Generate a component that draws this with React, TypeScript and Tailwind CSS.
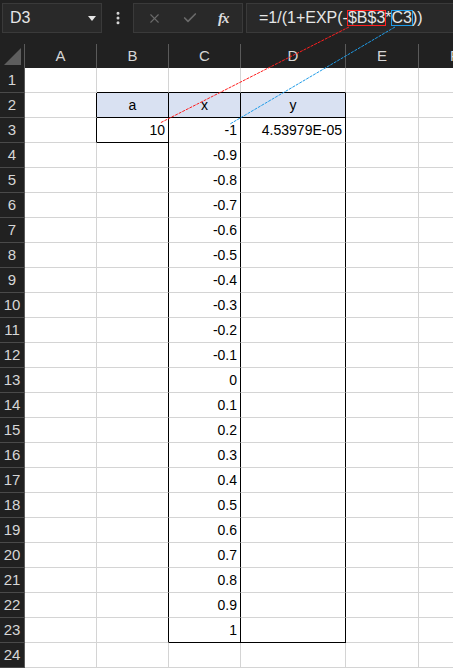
import { Check, X, EllipsisVertical } from "lucide-react";

const COLS = ["A", "B", "C", "D", "E", "F"];
const ROWS = Array.from({ length: 24 }, (_, i) => i + 1);

const xValues = [
  "-1", "-0.9", "-0.8", "-0.7", "-0.6", "-0.5", "-0.4", "-0.3", "-0.2", "-0.1",
  "0", "0.1", "0.2", "0.3", "0.4", "0.5", "0.6", "0.7", "0.8", "0.9", "1",
];

// col index: 0 = A ... 5 = F
function inTable(col: number, row: number) {
  if (col === 1) return row === 2 || row === 3;
  if (col === 2 || col === 3) return row >= 2 && row <= 23;
  return false;
}

// horizontal borders: header row boxed, B3 boxed, C3:C23 and D3:D23 outlined
function bottomIsBlack(col: number, row: number) {
  if (col >= 1 && col <= 3 && (row === 1 || row === 2)) return true;
  if (col === 1 && row === 3) return true;
  if ((col === 2 || col === 3) && row === 23) return true;
  return false;
}

function cellText(col: number, row: number): { text: string; align: "center" | "right" } | null {
  if (row === 2) {
    if (col === 1) return { text: "a", align: "center" };
    if (col === 2) return { text: "x", align: "center" };
    if (col === 3) return { text: "y", align: "center" };
  }
  if (col === 1 && row === 3) return { text: "10", align: "right" };
  if (col === 2 && row >= 3 && row <= 23) return { text: xValues[row - 3], align: "right" };
  if (col === 3 && row === 3) return { text: "4.53979E-05", align: "right" };
  return null;
}

function Cell({ col, row }: { col: number; row: number }) {
  const rightBlack = inTable(col, row) || inTable(col + 1, row);
  const bottomBlack = bottomIsBlack(col, row);
  const fill = row === 2 && col >= 1 && col <= 3 ? "bg-[#d9e1f2]" : "bg-white";
  const content = cellText(col, row);
  return (
    <div
      className={`h-[25px] border-r border-b flex items-center px-[3px] text-[14px] text-black ${fill} ${
        rightBlack ? "border-r-black" : "border-r-[#d4d4d4]"
      } ${bottomBlack ? "border-b-black" : "border-b-[#d4d4d4]"} ${
        content?.align === "center" ? "justify-center" : "justify-end"
      }`}
    >
      {content?.text}
    </div>
  );
}

export default function App() {
  return (
    <div className="relative w-[453px] h-[668px] overflow-hidden bg-[#212121] font-['Liberation_Sans','Noto_Sans_CJK_JP',sans-serif]">
      {/* formula bar */}
      <div className="h-[44px] flex items-start pt-[3px] pl-[2px]">
        <div className="w-[100px] h-[30px] border border-[#3a3a3a] bg-[#292929] flex items-center justify-between pl-[7px] pr-[5px]">
          <span className="text-[16px] text-[#e6e6e6]">D3</span>
          <svg width="8" height="5" viewBox="0 0 8 5">
            <path d="M0 0 L8 0 L4 5 Z" fill="#e6e6e6" />
          </svg>
        </div>
        <div className="w-[31px] h-[30px] flex items-center justify-center">
          <EllipsisVertical size={16} strokeWidth={2.5} className="text-[#d8d8d8]" />
        </div>
        <div className="w-[110px] h-[30px] border border-[#3a3a3a] bg-[#292929] flex items-center pl-[13px]">
          <X size={15} strokeWidth={1.75} className="text-[#6a6a6a]" />
          <Check size={16} strokeWidth={2.5} className="ml-[20px] text-[#6a6a6a]" />
          <span className="ml-[20px] font-['Liberation_Serif',serif] italic font-bold text-[15px] text-[#dcdcdc] tracking-[-1px]">
            fx
          </span>
        </div>
        <div className="ml-[3px] flex-1 h-[30px] border border-r-0 border-[#3a3a3a] bg-[#292929] flex items-center pl-[12px] text-[16px] text-[#e6e6e6] whitespace-nowrap">
          =1/(1+EXP(-
          <span className="inline-block leading-[14px] outline outline-1 outline-[#ff1e1e]">$B$3</span>*
          <span className="inline-block leading-[14px] outline outline-1 outline-[#1e9be8]">C3</span>))
        </div>
      </div>

      {/* sheet grid */}
      <div className="grid grid-cols-[25px_72px_72px_72px_105px_73px_72px]">
        <div className="h-[24px] border-r border-[#5a5a5a] relative">
          <svg className="absolute left-[4px] top-[4px]" width="17" height="17" viewBox="0 0 17 17">
            <path d="M17 0 L17 17 L0 17 Z" fill="#5e5e5e" />
          </svg>
        </div>
        {COLS.map((c) => (
          <div
            key={c}
            className="h-[24px] border-r border-[#5a5a5a] flex items-center justify-center text-[15px] text-[#d6d6d6]"
          >
            {c}
          </div>
        ))}
        {ROWS.map((r) => (
          <div key={r} className="contents">
            <div className="h-[25px] border-r border-r-[#5a5a5a] border-b border-b-[#4a4a4a] flex items-center justify-center text-[15px] text-[#d6d6d6]">
              {r}
            </div>
            {COLS.map((_, ci) => (
              <Cell key={ci} col={ci} row={r} />
            ))}
          </div>
        ))}
      </div>

      {/* reference arrows */}
      <svg className="absolute inset-0 pointer-events-none" width="453" height="668">
        <line x1="349" y1="27" x2="160" y2="123" stroke="#ff1e1e" strokeWidth="1" strokeDasharray="3 1" />
        <line x1="395" y1="27" x2="230" y2="124" stroke="#1e9be8" strokeWidth="1" strokeDasharray="3 1" />
      </svg>
    </div>
  );
}
